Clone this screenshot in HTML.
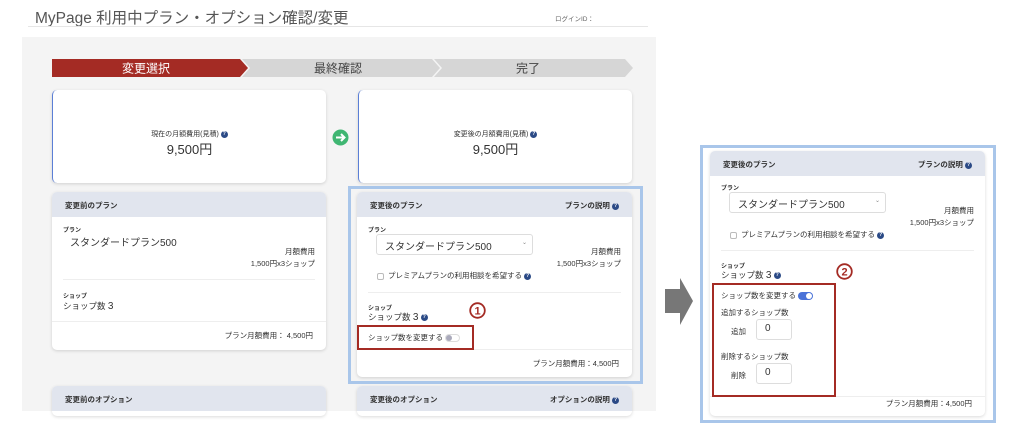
<!DOCTYPE html>
<html><head><meta charset="utf-8"><style>
*{box-sizing:border-box;margin:0;padding:0}
body{width:1024px;height:429px;background:#fff;position:relative;overflow:hidden;font-family:"Liberation Sans","Noto Sans CJK JP",sans-serif;color:#333}
.a{position:absolute}
.card{position:absolute;background:#fff;border-radius:5px;box-shadow:0 1px 3px rgba(0,0,0,.15);overflow:hidden}
.hd{position:absolute;left:0;right:0;top:0;height:25px;background:#e1e5ee;font-size:7.5px;font-weight:bold;padding:8px 13px;color:#333}
.hd .r{position:absolute;right:13px;top:8px}
.q{display:inline-block;width:7px;height:7px;border-radius:50%;background:#2b4a86;color:#fff;font-size:5px;line-height:7px;text-align:center;vertical-align:middle;font-weight:bold}
.s{font-size:6px;font-weight:bold}
.t7{font-size:7.5px}
.sel{position:absolute;background:#fff;border:1px solid #ddd;border-radius:3px;font-size:10px;padding:3px 8px}
.cb{display:inline-block;width:7px;height:7px;border:1px solid #bbb;border-radius:2px;vertical-align:middle;margin-right:4px}
.red{position:absolute;border:2px solid #a42b24}
</style></head><body>
<div class="a" style="left:35px;top:6px;font-size:15.5px;color:#555">MyPage 利用中プラン・オプション確認/変更</div>
<div class="a" style="left:555px;top:13px;font-size:6.5px;color:#666">ログインID：</div>
<div class="a" style="left:28px;top:26px;width:620px;height:1px;background:#e6e6e6"></div>
<div class="a" style="left:22px;top:37px;width:634px;height:374px;background:#f4f4f4"></div>
<svg class="a" style="left:52px;top:59px" width="582" height="18">
<polygon points="0,0 188,0 196,9 188,18 0,18" fill="#a42b24"/>
<polygon points="190,0 380,0 388,9 380,18 190,18 198,9" fill="#d6d6d6"/>
<polygon points="382,0 573,0 581,9 573,18 382,18 390,9" fill="#d6d6d6"/>
<text x="94" y="13.5" font-size="12" fill="#fff" text-anchor="middle" font-family="Liberation Sans,Noto Sans CJK JP,sans-serif">変更選択</text>
<text x="286" y="13.5" font-size="12" fill="#444" text-anchor="middle" font-family="Liberation Sans,Noto Sans CJK JP,sans-serif">最終確認</text>
<text x="476" y="13.5" font-size="12" fill="#444" text-anchor="middle" font-family="Liberation Sans,Noto Sans CJK JP,sans-serif">完了</text>
</svg>
<div class="card" style="left:52px;top:90px;width:274px;height:93px;border-left:1.5px solid #5b7fd6">
<div class="a t7" style="left:0;right:0;top:39px;text-align:center;font-size:7px">現在の月額費用(見積) <span class="q">?</span></div>
<div class="a" style="left:0;right:0;top:49px;text-align:center;font-size:13px">9,500円</div></div>
<svg class="a" style="left:332px;top:129px" width="17" height="17"><circle cx="8.5" cy="8.5" r="8" fill="#3fb672"/><path d="M4 8.5h8M9 5l3.5 3.5L9 12" stroke="#fff" stroke-width="2" fill="none"/></svg>
<div class="card" style="left:358px;top:90px;width:274px;height:93px;border-left:1.5px solid #5b7fd6">
<div class="a t7" style="left:0;right:0;top:39px;text-align:center;font-size:7px">変更後の月額費用(見積) <span class="q">?</span></div>
<div class="a" style="left:0;right:0;top:49px;text-align:center;font-size:13px">9,500円</div></div>

<div class="card" style="left:52px;top:192px;width:274px;height:158px">
<div class="hd">変更前のプラン</div>
<div class="a s" style="left:11px;top:33px">プラン</div>
<div class="a" style="left:18px;top:42px;font-size:10px">スタンダードプラン500</div>
<div class="a t7" style="right:11px;top:54px;text-align:right;line-height:12px">月額費用<br>1,500円x3ショップ</div>
<div class="a" style="left:11px;right:11px;top:87px;height:1px;background:#eee"></div>
<div class="a s" style="left:11px;top:99px">ショップ</div>
<div class="a" style="left:11px;top:108px;font-size:8.5px">ショップ数 <span style="font-size:10px">3</span></div>
<div class="a" style="left:0;right:0;top:129px;height:1px;background:#eee"></div>
<div class="a t7" style="right:13px;top:138px">プラン月額費用： 4,500円</div>
</div>
<div class="card" style="left:52px;top:386px;width:274px;height:30px"><div class="hd">変更前のオプション</div></div>

<div class="a" style="left:348px;top:186px;width:295px;height:198px;border:3px solid #a9c6ea"></div>
<div class="card" style="left:357px;top:192px;width:275px;height:185px">
<div class="hd">変更後のプラン<span class="r">プランの説明 <span class="q">?</span></span></div>
<div class="a s" style="left:11px;top:33px">プラン</div>
<div class="sel" style="left:19px;top:42px;width:157px;height:21px">スタンダードプラン500<span style="position:absolute;right:5px;top:4px;font-size:6px;color:#888">⌄</span></div>
<div class="a t7" style="right:11px;top:54px;text-align:right;line-height:12px">月額費用<br>1,500円x3ショップ</div>
<div class="a t7" style="left:20px;top:78px"><span class="cb"></span>プレミアムプランの利用相談を希望する <span class="q">?</span></div>
<div class="a" style="left:11px;right:11px;top:100px;height:1px;background:#eee"></div>
<div class="a s" style="left:11px;top:111px">ショップ</div>
<div class="a" style="left:11px;top:119px;font-size:8.5px">ショップ数 <span style="font-size:10px">3</span> <span class="q">?</span></div>
<div class="a t7" style="left:11px;top:140px">ショップ数を変更する <span style="display:inline-block;width:15px;height:8px;border:1px solid #ddd;border-radius:4px;vertical-align:middle;position:relative"><span style="position:absolute;left:0;top:0;width:6px;height:6px;border-radius:50%;background:#aab"></span></span></div>
<div class="a" style="left:0;right:0;top:157px;height:1px;background:#eee"></div>
<div class="a t7" style="right:13px;top:166px">プラン月額費用：4,500円</div>
</div>
<div class="red" style="left:357px;top:325px;width:117px;height:25px"></div>
<svg class="a" style="left:469px;top:302px" width="17" height="17"><circle cx="8.5" cy="8.5" r="7.3" fill="none" stroke="#a42b24" stroke-width="1.8"/><text x="8.5" y="12.5" font-size="11" font-weight="bold" fill="#a42b24" text-anchor="middle" font-family="Liberation Sans,sans-serif">1</text></svg>
<div class="card" style="left:357px;top:386px;width:275px;height:30px"><div class="hd">変更後のオプション<span class="r">オプションの説明 <span class="q">?</span></span></div></div>

<svg class="a" style="left:664px;top:277px" width="30" height="50"><polygon points="1,12 16,12 16,1 29,24 16,48 16,36 1,36" fill="#777"/></svg>

<div class="a" style="left:700px;top:145px;width:296px;height:278px;border:3px solid #a9c6ea"></div>
<div class="card" style="left:710px;top:151px;width:275px;height:265px">
<div class="hd">変更後のプラン<span class="r">プランの説明 <span class="q">?</span></span></div>
<div class="a s" style="left:11px;top:32px">プラン</div>
<div class="sel" style="left:19px;top:41px;width:157px;height:21px">スタンダードプラン500<span style="position:absolute;right:5px;top:4px;font-size:6px;color:#888">⌄</span></div>
<div class="a t7" style="right:11px;top:54px;text-align:right;line-height:12px">月額費用<br>1,500円x3ショップ</div>
<div class="a t7" style="left:20px;top:78px"><span class="cb"></span>プレミアムプランの利用相談を希望する <span class="q">?</span></div>
<div class="a" style="left:11px;right:11px;top:99px;height:1px;background:#eee"></div>
<div class="a s" style="left:11px;top:110px">ショップ</div>
<div class="a" style="left:11px;top:118px;font-size:8.5px">ショップ数 <span style="font-size:10px">3</span> <span class="q">?</span></div>
<div class="a t7" style="left:11px;top:139px">ショップ数を変更する <span style="display:inline-block;width:15px;height:8px;background:#4a72d8;border-radius:4px;vertical-align:middle;position:relative"><span style="position:absolute;right:1px;top:1px;width:6px;height:6px;border-radius:50%;background:#fff"></span></span></div>
<div class="a t7" style="left:11px;top:156px">追加するショップ数</div>
<div class="a t7" style="left:21px;top:175px">追加</div>
<div class="sel" style="left:46px;top:168px;width:36px;height:21px;font-size:10px">0</div>
<div class="a t7" style="left:11px;top:200px">削除するショップ数</div>
<div class="a t7" style="left:21px;top:219px">削除</div>
<div class="sel" style="left:46px;top:212px;width:36px;height:21px;font-size:10px">0</div>
<div class="a" style="left:0;right:0;top:245px;height:1px;background:#eee"></div>
<div class="a t7" style="right:13px;top:247px">プラン月額費用：4,500円</div>
</div>
<div class="red" style="left:712px;top:283px;width:124px;height:114px"></div>
<svg class="a" style="left:836px;top:263px" width="17" height="17"><circle cx="8.5" cy="8.5" r="7.3" fill="none" stroke="#a42b24" stroke-width="1.8"/><text x="8.5" y="12.5" font-size="11" font-weight="bold" fill="#a42b24" text-anchor="middle" font-family="Liberation Sans,sans-serif">2</text></svg>
</body></html>
